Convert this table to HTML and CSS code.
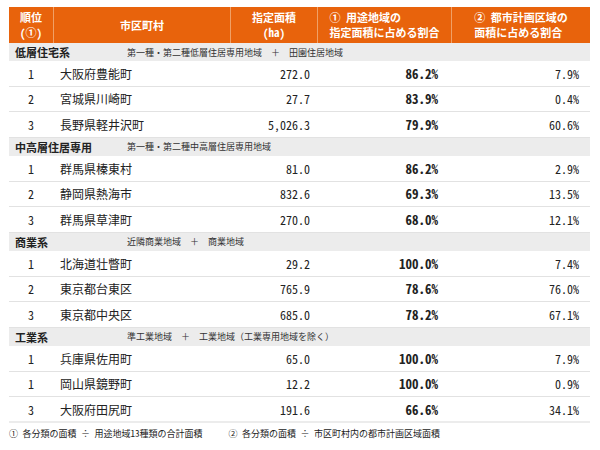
FILE: index.html
```html
<!DOCTYPE html>
<html lang="ja">
<head>
<meta charset="utf-8">
<link rel="stylesheet" href="styles.css">
</head>
<body>
<div class="tbl">
  <div class="row head">
    <div class="hc"><span class="hb">順位<br>(①)</span></div>
    <div class="hc"><span class="hb">市区町村</span></div>
    <div class="hc"><span class="hb hcenter">指定面積<br>(ha)</span></div>
    <div class="hc"><span class="hb">① 用途地域の<br>指定面積に占める割合</span></div>
    <div class="hc"><span class="hb">② 都市計画区域の<br>面積に占める割合</span></div>
  </div>

  <div class="cat"><span class="cl">低層住宅系</span><span class="cd">第一種・第二種低層住居専用地域　＋　田園住居地域</span></div>
  <div class="row"><div class="rk">1</div><div class="nm">大阪府豊能町</div><div class="ar">272.0</div><div class="p1">86.2%</div><div class="p2">7.9%</div></div>
  <div class="row"><div class="rk">2</div><div class="nm">宮城県川崎町</div><div class="ar">27.7</div><div class="p1">83.9%</div><div class="p2">0.4%</div></div>
  <div class="row"><div class="rk">3</div><div class="nm">長野県軽井沢町</div><div class="ar">5,026.3</div><div class="p1">79.9%</div><div class="p2">60.6%</div></div>

  <div class="cat"><span class="cl">中高層住居専用</span><span class="cd">第一種・第二種中高層住居専用地域</span></div>
  <div class="row"><div class="rk">1</div><div class="nm">群馬県榛東村</div><div class="ar">81.0</div><div class="p1">86.2%</div><div class="p2">2.9%</div></div>
  <div class="row"><div class="rk">2</div><div class="nm">静岡県熱海市</div><div class="ar">832.6</div><div class="p1">69.3%</div><div class="p2">13.5%</div></div>
  <div class="row"><div class="rk">3</div><div class="nm">群馬県草津町</div><div class="ar">270.0</div><div class="p1">68.0%</div><div class="p2">12.1%</div></div>

  <div class="cat"><span class="cl">商業系</span><span class="cd">近隣商業地域　＋　商業地域</span></div>
  <div class="row"><div class="rk">1</div><div class="nm">北海道壮瞥町</div><div class="ar">29.2</div><div class="p1">100.0%</div><div class="p2">7.4%</div></div>
  <div class="row"><div class="rk">2</div><div class="nm">東京都台東区</div><div class="ar">765.9</div><div class="p1">78.6%</div><div class="p2">76.0%</div></div>
  <div class="row"><div class="rk">3</div><div class="nm">東京都中央区</div><div class="ar">685.0</div><div class="p1">78.2%</div><div class="p2">67.1%</div></div>

  <div class="cat"><span class="cl">工業系</span><span class="cd">準工業地域　＋　工業地域（工業専用地域を除く）</span></div>
  <div class="row"><div class="rk">1</div><div class="nm">兵庫県佐用町</div><div class="ar">65.0</div><div class="p1">100.0%</div><div class="p2">7.9%</div></div>
  <div class="row"><div class="rk">1</div><div class="nm">岡山県鏡野町</div><div class="ar">12.2</div><div class="p1">100.0%</div><div class="p2">0.9%</div></div>
  <div class="row last"><div class="rk">3</div><div class="nm">大阪府田尻町</div><div class="ar">191.6</div><div class="p1">66.6%</div><div class="p2">34.1%</div></div>
</div>
<p class="note"><span>① 各分類の面積 ÷ 用途地域13種類の合計面積</span><span>② 各分類の面積 ÷ 市区町村内の都市計画区域面積</span></p>
</body>
</html>
```

FILE: styles.css
```css
html, body {
  margin: 0;
  padding: 0;
  background: #ffffff;
}
body {
  padding: 7px 10px 0 9px;
  font-family: "Noto Sans Mono CJK JP", "Noto Sans CJK JP", sans-serif;
  color: #222222;
}
.tbl {
  width: 581px;
}
.row {
  display: grid;
  grid-template-columns: 44px 177px 87px 134px 139px;
  height: 25.67px;
  box-sizing: border-box;
  border-bottom: 1px solid #e2e2e2;
  align-items: center;
  font-size: 12px;
}
.row.last {
  border-bottom: 2px solid #ececec;
}
.head {
  height: 36px;
  background: #e8630c;
  color: #ffffff;
  border-bottom: none;
  align-items: stretch;
}
.hc {
  display: flex;
  align-items: center;
  justify-content: center;
  border-left: 1px solid #f0a066;
}
.hc:first-child {
  border-left: none;
}
.hb {
  font-size: 11px;
  font-weight: bold;
  line-height: 15px;
  text-align: left;
}
.hcenter {
  text-align: center;
}
.cat {
  display: flex;
  align-items: center;
  height: 18px;
  background: #ececec;
}
.cl {
  width: 112px;
  padding-left: 6px;
  font-size: 11px;
  font-weight: bold;
}
.cd {
  font-size: 9px;
  color: #333333;
}
.rk {
  text-align: center;
}
.nm {
  padding-left: 7px;
}
.ar {
  text-align: right;
  padding-right: 7px;
}
.p1 {
  text-align: right;
  padding-right: 13px;
  font-weight: bold;
  font-size: 13px;
}
.p2 {
  text-align: right;
  padding-right: 11px;
}
.note {
  margin: 4px 0 0 0;
  font-size: 9px;
  display: flex;
  gap: 26px;
}
```
